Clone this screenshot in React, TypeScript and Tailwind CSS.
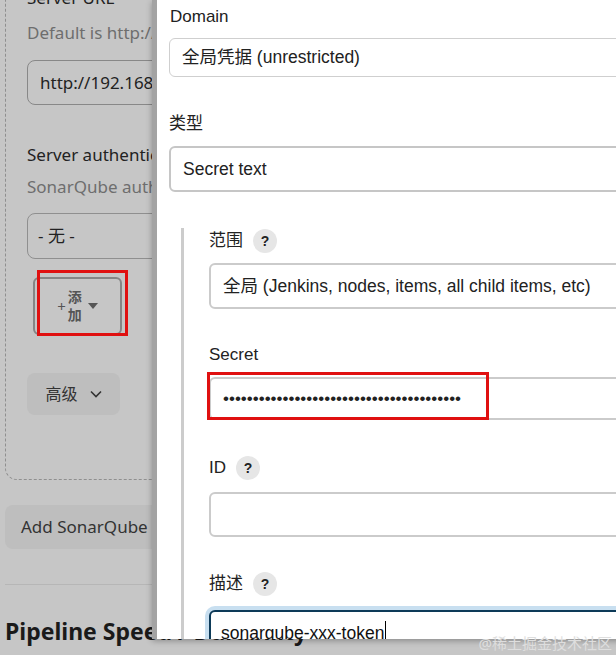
import React from 'react';

const modalFont = { fontFamily: '"Liberation Sans", Arial, "Noto Sans CJK SC", sans-serif' };
const pageFont = { fontFamily: '"Noto Sans", "Open Sans", "Noto Sans CJK SC", sans-serif' };

const Help = () => (
  <span className="ml-[10px] inline-flex h-[24px] w-[24px] items-center justify-center rounded-full bg-[#e6e6e6] text-[14px] font-bold text-[#222]">
    ?
  </span>
);

const Caret = () => (
  <svg width="10" height="6" viewBox="0 0 10 6" className="ml-[6px]">
    <path d="M0 0h10L5 6z" fill="#555" />
  </svg>
);

const BackgroundPage = () => (
  <div className="w-[616px] pl-[5px]" style={pageFont}>
    {/* dashed server block */}
    <div className="-mt-[14px] rounded-bl-[12px] border-b border-l border-dashed border-[#8f8f8f] pb-[64px] pl-[21px]">
      <div className="text-[17px] leading-[24px] text-[#222]">Server URL</div>
      <div className="mt-[11px] text-[17px] leading-[24px] text-[#6e6e6e]">Default is http://localhost:9000</div>
      <div className="mt-[15px] flex h-[45px] w-[420px] items-center rounded-lg border border-[#888] pl-[12px] text-[17px] text-[#222]">
        http://192.168.1.100:9000
      </div>
      <div className="mt-[38px] text-[17px] leading-[24px] text-[#222]">Server authentication token</div>
      <div className="mt-[8px] text-[17px] leading-[24px] text-[#6e6e6e]">SonarQube authentication token</div>
      <div className="mt-[14px] flex h-[46px] w-[420px] items-center rounded-lg border border-[#8f8f8f] pl-[10px] text-[17px] text-[#222]">
        - 无 -
      </div>
      <div className="relative mt-[18px] h-[58px] w-[89px] rounded-md border-2 border-[#858585] ml-[6px]">
        <div className="flex h-full items-center justify-center text-[14px] text-[#555]">
          <span className="mr-[2px] text-[15px]">+</span>
          <span className="flex flex-col leading-[18px] font-semibold">
            <span>添</span>
            <span>加</span>
          </span>
          <Caret />
        </div>
        <div className="absolute -top-[9px] left-[2px] h-[66px] w-[91px] border-[3px] border-[#e01010]" />
      </div>
      <div className="mt-[38px] flex h-[42px] w-[93px] items-center justify-center rounded-lg bg-[#bebebe] text-[16px] text-[#333]">
        高级
        <svg width="12" height="8" viewBox="0 0 12 8" className="ml-[12px]">
          <path d="M1 1.5l5 5 5-5" stroke="#333" strokeWidth="1.6" fill="none" />
        </svg>
      </div>
    </div>
    <div className="mt-[25px] flex h-[44px] w-[200px] items-center rounded-lg bg-[#bebebe] pl-[16px] text-[17px] text-[#333]">
      Add SonarQube
    </div>
    <div className="mt-[35px] h-px w-[600px] bg-[#b6b6b6]" />
    <div className="mt-[32px] text-[23px] font-bold leading-[28px] text-[#1a1a1a]">Pipeline Speed / Durability</div>
  </div>
);

const Box = ({ h, border, children }: { h: string; border: string; children?: React.ReactNode }) => (
  <div className={`flex ${h} w-[520px] items-center rounded-md ${border} bg-white pl-[12px] text-[17.5px] text-[#222]`}>
    {children}
  </div>
);

const Modal = () => (
  <div
    className="absolute left-[152px] top-0 h-[639px] w-[520px] overflow-hidden border-l-[5px] border-[#a3a3a3] bg-white shadow-[0_2px_6px_rgba(0,0,0,0.3)]"
    style={modalFont}
  >
    <div className="pl-[12px] pt-[6px]">
      <div className="ml-[1px] text-[17px] leading-[22px] text-[#222]">Domain</div>
      <div className="mt-[10px]">
        <Box h="h-[39px]" border="border border-[#cfcfcf]">全局凭据 (unrestricted)</Box>
      </div>
      <div className="mt-[36px] text-[17px] leading-[22px] text-[#222]">类型</div>
      <div className="mt-[11px]">
        <Box h="h-[46px]" border="border-2 border-[#c6c6c6]">Secret text</Box>
      </div>
      <div className="ml-[12px] mt-[36px] border-l-[3px] border-[#cccccc] pl-[25px] pt-[1px]">
        <div className="flex items-center text-[17px] leading-[24px] text-[#222]">
          范围
          <Help />
        </div>
        <div className="mt-[10px]">
          <Box h="h-[46px]" border="border-2 border-[#cbcbcb]">全局 (Jenkins, nodes, items, all child items, etc)</Box>
        </div>
        <div className="mt-[35px] text-[17px] leading-[22px] text-[#222]">Secret</div>
        <div className="relative mt-[11px]">
          <Box h="h-[43px]" border="border-2 border-[#cbcbcb]">
            <span className="text-[17px] text-[#222]">
              ••••••••••••••••••••••••••••••••••••••••
            </span>
          </Box>
          <div className="absolute -left-[2px] -top-[5px] h-[48px] w-[282px] border-[3px] border-[#e01010]" />
        </div>
        <div className="mt-[36px] flex items-center text-[17px] leading-[24px] text-[#222]">
          ID
          <Help />
        </div>
        <div className="mt-[12px]">
          <Box h="h-[45px]" border="border-2 border-[#cbcbcb]" />
        </div>
        <div className="mt-[35px] flex items-center text-[17px] leading-[24px] text-[#222]">
          描述
          <Help />
        </div>
        <div className="mt-[14px]">
          <div className="flex h-[46px] w-[520px] items-center rounded-md border-2 border-[#0d3a58] bg-white pl-[10px] text-[17.5px] text-[#111] shadow-[0_0_0_4px_#c8dff0]">
            sonarqube-xxx-token
            <span className="ml-px h-[24px] w-px bg-black" />
          </div>
        </div>
      </div>
    </div>
  </div>
);

export default function App() {
  return (
    <div className="relative h-[655px] w-[616px] overflow-hidden bg-[#c6c6c6]">
      <BackgroundPage />
      <Modal />
      <div
        className="absolute bottom-[1px] right-[4px] text-[15px] text-[#dedede]"
        style={pageFont}
      >
        @稀土掘金技术社区
      </div>
    </div>
  );
}
